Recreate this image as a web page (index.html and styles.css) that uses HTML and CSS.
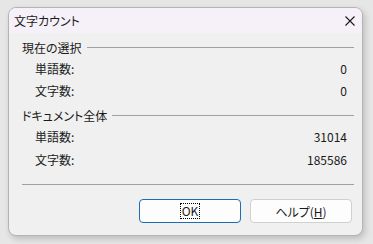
FILE: index.html
```html
<!DOCTYPE html>
<html lang="ja">
<head>
<meta charset="utf-8">
<link rel="stylesheet" href="styles.css">
</head>
<body>
<div class="window">
  <div class="titlebar">
    <span class="title">文字カウント</span>
    <svg class="close" width="10" height="10" viewBox="0 0 10 10"><path d="M0.5 0.5 L9.5 9.5 M9.5 0.5 L0.5 9.5" stroke="#1a1a1a" stroke-width="1.1" fill="none"/></svg>
  </div>
  <div class="content">
    <div class="group-label"><span>現在の選択</span><i class="rule"></i></div>
    <div class="row"><span>単語数:</span><span>0</span></div>
    <div class="row"><span>文字数:</span><span>0</span></div>
    <div class="group-label second"><span>ドキュメント全体</span><i class="rule"></i></div>
    <div class="row tall"><span>単語数:</span><span>31014</span></div>
    <div class="row tall"><span>文字数:</span><span>185586</span></div>
    <div class="sep"></div>
    <div class="buttons">
      <button class="btn primary"><span class="focus">OK</span></button>
      <button class="btn">ヘルプ(<u>H</u>)</button>
    </div>
  </div>
</div>
</body>
</html>
```
FILE: styles.css
```css
html, body {
  margin: 0;
  padding: 0;
}
body {
  width: 373px;
  height: 244px;
  background: #e6e6e6;
  font-family: "Noto Sans CJK JP", "Noto Sans", sans-serif;
  font-size: 12px;
  font-feature-settings: "palt";
  color: #1a1a1a;
  padding: 7px 0 0 8px;
  box-sizing: border-box;
}
.window {
  width: 355px;
  height: 229px;
  box-sizing: border-box;
  border: 1px solid #b4b4b4;
  border-radius: 8px;
  background: #f0f0f0;
  overflow: hidden;
  box-shadow: 2px 3px 6px rgba(0,0,0,0.18);
  display: flex;
  flex-direction: column;
}
.titlebar {
  height: 25px;
  background: #f6f0f8;
  display: flex;
  align-items: center;
  justify-content: space-between;
  padding: 0 7px 0 5px;
  flex: none;
}
.title {
  font-size: 12px;
  line-height: 25px;
}
.close {
  display: block;
}
.content {
  padding: 4px 8px 0 13px;
  display: flex;
  flex-direction: column;
}
.group-label {
  height: 20px;
  display: flex;
  align-items: center;
  gap: 5px;
}
.group-label.second {
  margin-top: 4px;
}
.rule {
  flex: 1;
  height: 1px;
  background: #a0a0a0;
  margin-top: 1px;
}
.row {
  height: 22px;
  display: flex;
  align-items: center;
  justify-content: space-between;
  padding: 0 7px 0 13px;
}
.row.tall {
  height: 23px;
}
.sep {
  height: 1px;
  background: #a0a0a0;
  margin-top: 13px;
}
.buttons {
  display: flex;
  justify-content: flex-end;
  gap: 9px;
  margin-top: 14px;
  padding-right: 2px;
}
.btn {
  width: 102px;
  height: 24px;
  box-sizing: border-box;
  border: 1px solid #d0d0d0;
  border-radius: 4px;
  background: #fdfdfd;
  font-family: inherit;
  font-size: 12px;
  font-feature-settings: "palt";
  color: #1a1a1a;
  padding: 0;
  display: flex;
  align-items: center;
  justify-content: center;
}
.btn.primary {
  border-color: #1c6bb5;
}
.focus {
  outline: 1px dotted #000;
  padding: 0 1px;
  line-height: 14px;
}
```
